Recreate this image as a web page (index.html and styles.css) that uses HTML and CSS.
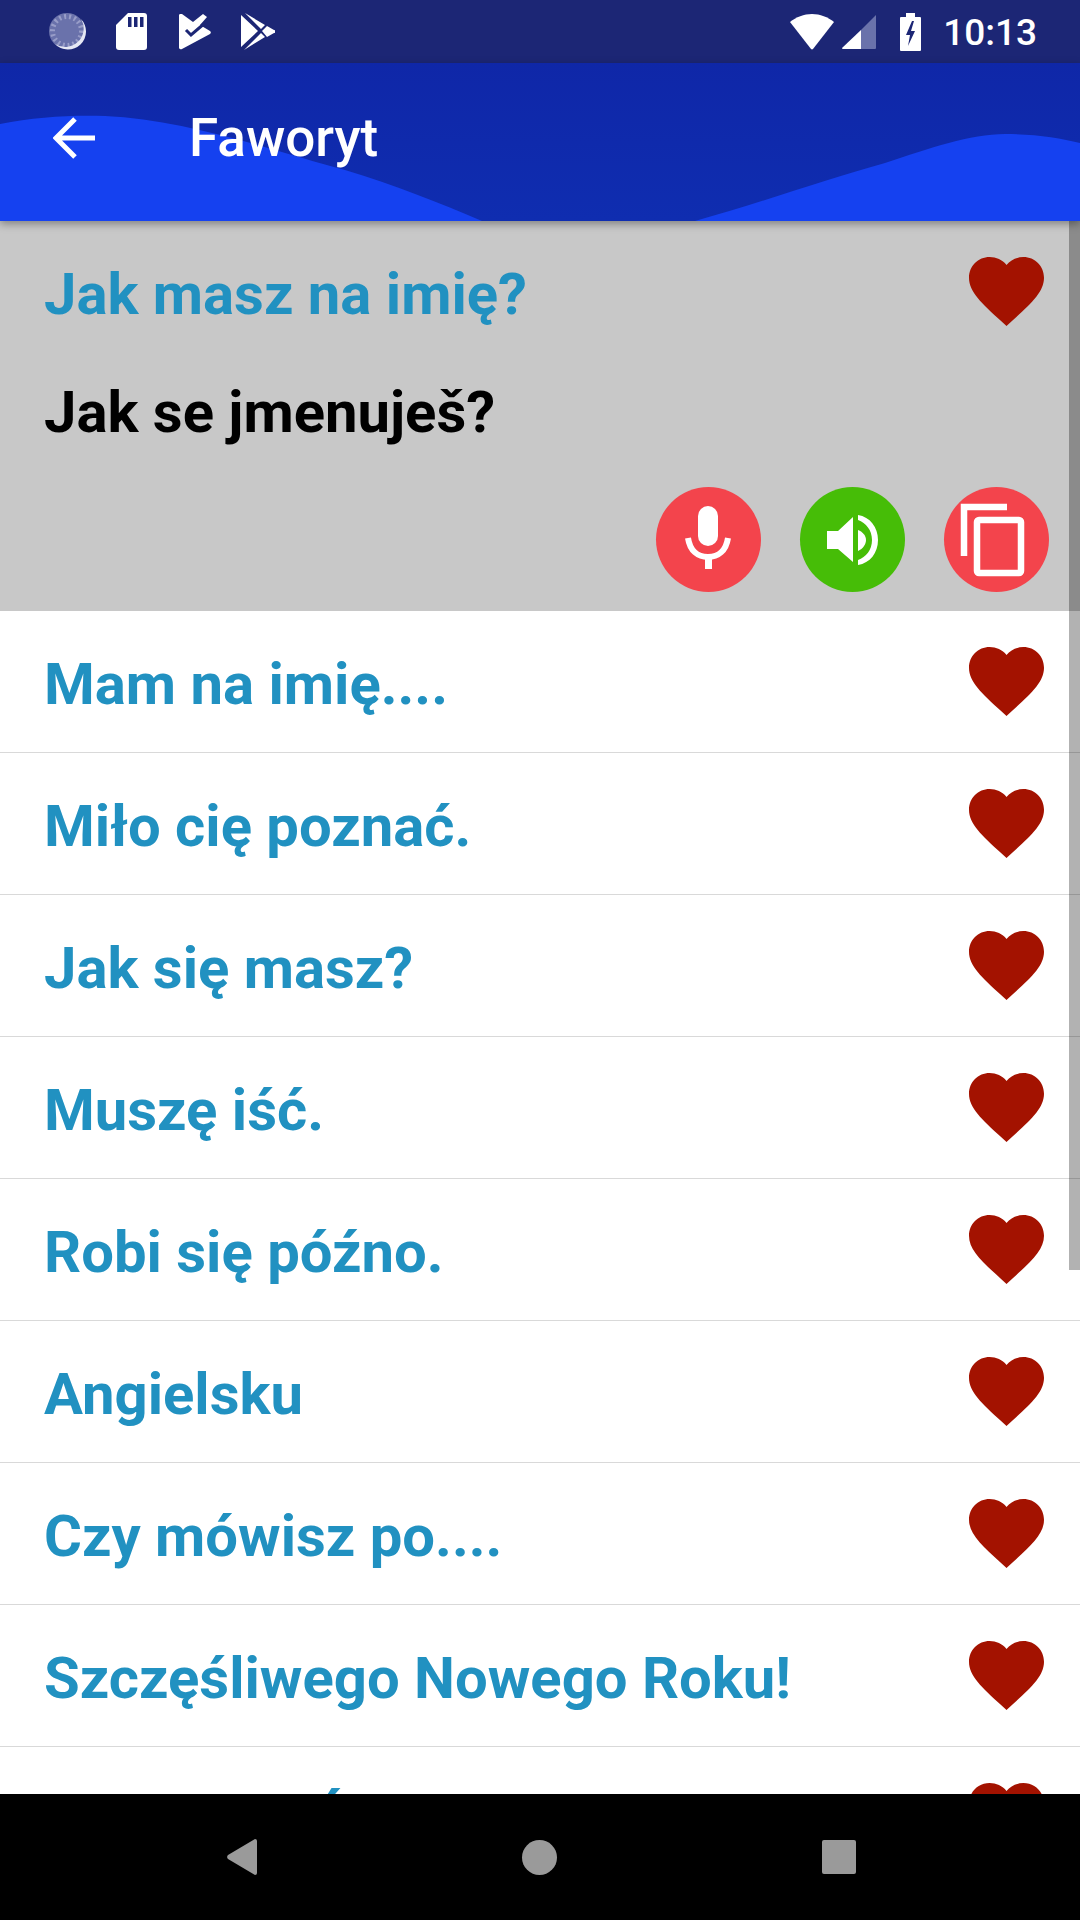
FILE: index.html
```html
<!DOCTYPE html>
<html lang="pl">
<head>
    <meta charset="utf-8">
    <title>Faworyt</title>
    <link rel="stylesheet" href="styles.css">
</head>
<body>
    <svg class="defs" width="0" height="0">
        <symbol id="heart" viewBox="2 3 20 18.35">
            <path d="M12 21.35l-1.45-1.32C5.4 15.36 2 12.28 2 8.5 2 5.42 4.42 3 7.5 3c1.74 0 3.41.81 4.5 2.09C13.09 3.81 14.76 3 16.5 3 19.58 3 22 5.42 22 8.5c0 3.78-3.4 6.86-8.55 11.54L12 21.35z"/>
        </symbol>
    </svg>
    <div class="screen">
        <div class="status-bar">
            <div class="status-left">
                <svg class="st-icon" width="38" height="37" viewBox="0 0 38 37">
                    <circle cx="18" cy="18" r="18" fill="#6a72ab"/>
                    <circle cx="18" cy="18" r="14.500" fill="none" stroke="#989dc8" stroke-width="5" stroke-dasharray="2 3"/>
                    <path d="M32 6A18 18 0 0 1 6 31A18.500 18.500 0 0 0 32 6z" fill="#e6e8f4"/>
                </svg>
                <svg class="st-icon" width="31" height="37" viewBox="0 0 31 37">
                    <path d="M12 0h16a3 3 0 0 1 3 3v31a3 3 0 0 1-3 3H3a3 3 0 0 1-3-3V12z" fill="#fff"/>
                    <path d="M12 4h3.500v10H12zM18 4h3.500v10H18zM24 4h3.500v10H24z" fill="#1c2675"/>
                </svg>
                <svg class="st-icon tasks-icon" width="32" height="36" viewBox="0 0 32 36">
                    <path d="M0 2a2 2 0 0 1 3-2L14 8l10-8 4 3-7 8 10 6a2 2 0 0 1 0 3L3 35a2 2 0 0 1-3-2z" fill="#fff"/>
                    <path d="M7 16l5 5 14-12" fill="none" stroke="#1c2675" stroke-width="3"/>
                </svg>
                <svg class="st-icon play-icon" width="34" height="37" viewBox="0 0 34 37">
                    <path d="M0 2l17 16L0 34zM4 0l20 12-4 4zM26 13l7 4a1.500 1.500 0 0 1 0 3l-7 4-5-6zM3 37l21-13-4-4z" fill="#fff"/>
                </svg>
            </div>
            <div class="status-right">
                <svg class="st-wifi" width="44" height="36" viewBox="0 0 44 36">
                    <path d="M0 8C6 3 14 0 22 0s16 3 22 8L23 35a1.500 1.500 0 0 1-2 0z" fill="#fff"/>
                </svg>
                <svg class="st-signal" width="35" height="35" viewBox="0 0 35 35">
                    <path d="M19 16L34 1v33a1 1 0 0 1-1 1H19z" fill="#6a72ab"/>
                    <path d="M19 16v19H1a1 1 0 0 1-1-1z" fill="#fff"/>
                </svg>
                <svg class="st-battery" width="21" height="38" viewBox="0 0 21 38">
                    <path d="M6 0h9v4h5a1 1 0 0 1 1 1v32a1 1 0 0 1-1 1H1a1 1 0 0 1-1-1V5a1 1 0 0 1 1-1h5z" fill="#fff"/>
                    <path d="M12 8L6 22h4l-2 11 7-15h-4l3-10z" fill="#1c2675"/>
                </svg>
                <span class="clock">10:13</span>
            </div>
        </div>

        <header class="app-bar">
            <svg class="wave" width="1080" height="158" viewBox="0 0 1080 158">
                <path d="M0 61C35 54 70 52 105 53C190 57 280 90 345 107C395 122 440 140 482 158H695C760 140 830 115 885 100C930 85 970 71 1005 71C1035 71 1060 75 1080 80V158H0z" fill="#1541f0"/>
            </svg>
            <svg class="back-arrow" width="42" height="42" viewBox="0 0 42 42">
                <path d="M42 21H4M22 2L3 21l19 19" fill="none" stroke="#fff" stroke-width="5"/>
            </svg>
            <h1 class="title">Faworyt</h1>
        </header>

        <main class="content">
            <section class="selected">
                <div class="selected-top">
                    <div class="phrase">Jak masz na imię?</div>
                    <svg class="heart"><use href="#heart"/></svg>
                </div>
                <div class="translation">Jak se jmenuješ?</div>
                <div class="actions">
                    <button class="round-btn red">
                        <svg width="105" height="105" viewBox="0 0 105 105">
                            <rect x="42" y="19" width="20" height="40" rx="10" fill="#fff"/>
                            <path d="M32 51c2 13 10 19 20 19s18-6 20-19" fill="none" stroke="#fff" stroke-width="6"/>
                            <path d="M49 68h7v14h-7z" fill="#fff"/>
                        </svg>
                    </button>
                    <button class="round-btn green">
                        <svg width="105" height="105" viewBox="0 0 105 105">
                            <path d="M27 44h11l15-14v45L38 62H27z" fill="#fff"/>
                            <path d="M58 43c5 2 8 6 8 10s-3 9-8 11z" fill="#fff"/>
                            <path d="M58 28c12 2 20 12 20 25s-8 23-20 25v-5c8-3 14-10 14-20s-6-17-14-20z" fill="#fff"/>
                        </svg>
                    </button>
                    <button class="round-btn red">
                        <svg width="105" height="105" viewBox="0 0 105 105">
                            <path d="M63 20H20v49" fill="none" stroke="#fff" stroke-width="6.500"/>
                            <rect x="33" y="33" width="44" height="53" rx="2" fill="none" stroke="#fff" stroke-width="6.500"/>
                        </svg>
                    </button>
                </div>
            </section>

            <ul class="list">
                <li class="row"><span class="phrase">Mam na imię....</span><svg class="heart"><use href="#heart"/></svg></li>
                <li class="row"><span class="phrase">Miło cię poznać.</span><svg class="heart"><use href="#heart"/></svg></li>
                <li class="row"><span class="phrase">Jak się masz?</span><svg class="heart"><use href="#heart"/></svg></li>
                <li class="row"><span class="phrase">Muszę iść.</span><svg class="heart"><use href="#heart"/></svg></li>
                <li class="row"><span class="phrase">Robi się późno.</span><svg class="heart"><use href="#heart"/></svg></li>
                <li class="row"><span class="phrase">Angielsku</span><svg class="heart"><use href="#heart"/></svg></li>
                <li class="row"><span class="phrase">Czy mówisz po....</span><svg class="heart"><use href="#heart"/></svg></li>
                <li class="row"><span class="phrase">Szczęśliwego Nowego Roku!</span><svg class="heart"><use href="#heart"/></svg></li>
                <li class="row"><span class="phrase">Wesołych Świąt!</span><svg class="heart"><use href="#heart"/></svg></li>
            </ul>

            <div class="scroll-thumb"></div>
        </main>

        <nav class="nav-bar">
            <svg width="30" height="36" viewBox="0 0 30 36"><path d="M28 0a2 2 0 0 1 2 2v32a2 2 0 0 1-2 2L1 20a3 3 0 0 1 0-4z" fill="#9a9a9a"/></svg>
            <div class="nav-home"></div>
            <div class="nav-recent"></div>
        </nav>
    </div>
</body>
</html>
```

FILE: styles.css
```css
* {
    box-sizing: border-box;
}

body {
    margin: 0;
    font-family: Roboto, "Liberation Sans", sans-serif;
}

.defs {
    position: absolute;
}

.screen {
    width: 1080px;
    height: 1920px;
    display: flex;
    flex-direction: column;
    background: #fff;
    overflow: hidden;
}

/* status bar */
.status-bar {
    height: 63px;
    flex-shrink: 0;
    background: #1c2675;
    display: flex;
    justify-content: space-between;
    align-items: center;
    padding: 0 43px 0 49px;
}

.status-left {
    display: flex;
    align-items: center;
    gap: 29px;
}

.status-right {
    display: flex;
    align-items: center;
}

.st-icon {
    display: block;
}

.tasks-icon {
    margin-left: 3px;
}

.play-icon {
    margin-left: 1px;
}

.st-signal {
    margin-left: 8px;
}

.st-battery {
    margin-left: 23px;
}

.clock {
    margin-left: 22px;
    padding-top: 2px;
    color: #fff;
    font-size: 37px;
    font-weight: 500;
    line-height: 1;
}

/* app bar */
.app-bar {
    height: 158px;
    flex-shrink: 0;
    position: relative;
    z-index: 2;
    display: flex;
    align-items: center;
    padding: 0 0 9px 53px;
    background: linear-gradient(#0f27a8, #0f2db0);
    box-shadow: 0 3px 8px rgba(0, 0, 0, 0.35);
}

.wave {
    position: absolute;
    left: 0;
    top: 0;
}

.back-arrow {
    position: relative;
    flex-shrink: 0;
}

.title {
    position: relative;
    margin: 0 0 0 94px;
    color: #fff;
    font-size: 53px;
    font-weight: 500;
}

/* content */
.content {
    flex: 1;
    min-height: 0;
    position: relative;
    overflow: hidden;
}

.selected {
    height: 390px;
    background: #c8c8c8;
    padding: 36px 31px 0 44px;
}

.selected-top {
    display: flex;
    justify-content: space-between;
    align-items: center;
}

.phrase {
    padding-top: 5px;
    color: #2191c1;
    font-size: 58px;
    font-weight: 700;
    line-height: 64px;
    white-space: nowrap;
}

.translation {
    margin-top: 49px;
    padding-top: 5px;
    color: #000;
    font-size: 58px;
    font-weight: 700;
    line-height: 64px;
}

.actions {
    display: flex;
    justify-content: flex-end;
    gap: 39px;
    margin-top: 43px;
}

.round-btn {
    width: 105px;
    height: 105px;
    padding: 0;
    border: none;
    border-radius: 50%;
}

.round-btn svg {
    display: block;
}

.red {
    background: #f3444c;
}

.green {
    background: #46bd07;
}

.heart {
    display: block;
    width: 75px;
    height: 69px;
    margin-right: 5px;
    flex-shrink: 0;
    fill: #a31200;
}

.list {
    list-style: none;
    margin: 0;
    padding: 0;
}

.row {
    height: 142px;
    display: flex;
    justify-content: space-between;
    align-items: center;
    padding: 0 31px 0 44px;
    border-bottom: 1px solid #d9d9d9;
}

.scroll-thumb {
    position: absolute;
    top: 0;
    right: 0;
    width: 11px;
    height: 1049px;
    background: rgba(0, 0, 0, 0.3);
}

/* navigation bar */
.nav-bar {
    height: 126px;
    flex-shrink: 0;
    position: relative;
    background: #000;
    display: flex;
    justify-content: center;
    align-items: center;
    gap: 265px;
    padding: 0 0 0 2px;
}

.nav-home {
    width: 35px;
    height: 35px;
    border-radius: 50%;
    background: #9a9a9a;
}

.nav-recent {
    width: 34px;
    height: 34px;
    border-radius: 2px;
    background: #9a9a9a;
}
```
